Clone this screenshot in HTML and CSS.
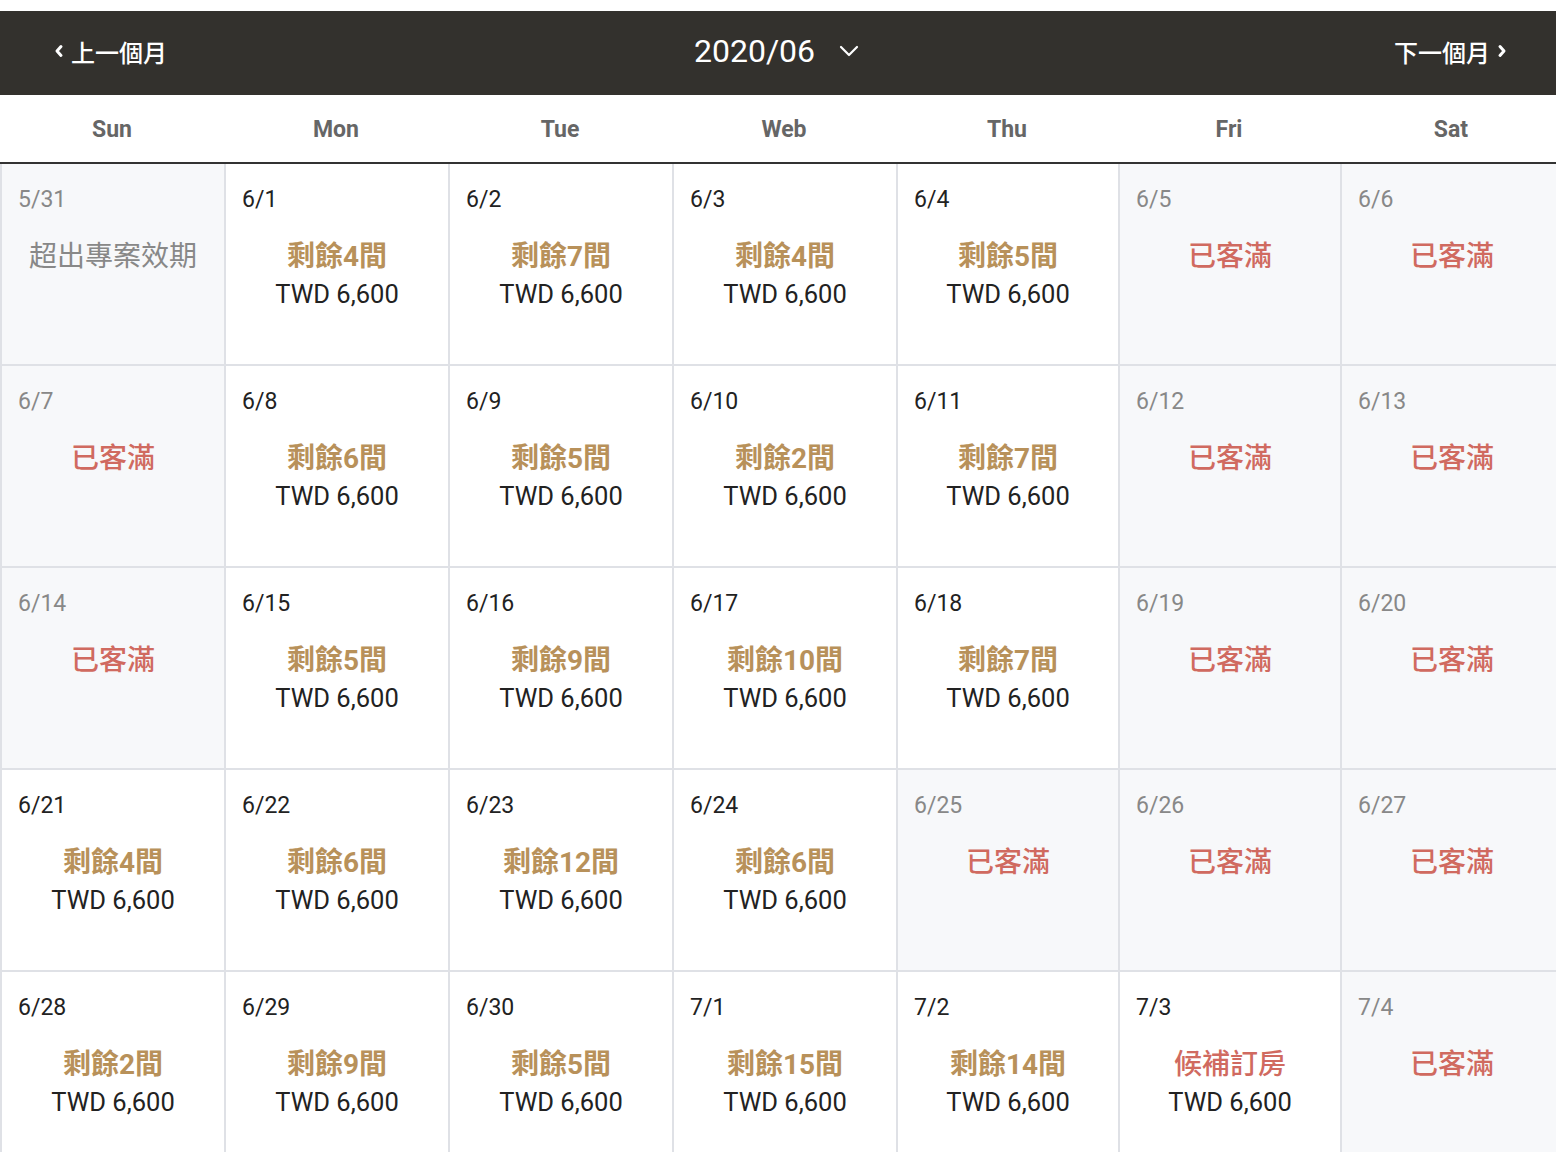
FILE: index.html
```html
<!DOCTYPE html>
<html lang="zh-Hant">
<head>
  <meta charset="UTF-8">
  <title>訂房日曆</title>
  <meta name="viewport" content="width=device-width, initial-scale=1">
  <link rel="stylesheet" href="styles.css">
</head>
<body>
  <div class="calendar">
    <div class="cal-bar">
      <a class="nav prev" href="#">
        <svg width="10" height="14" viewBox="0 0 10 14"><polyline points="7,2.5 3,7 7,11.5" fill="none" stroke="#fff" stroke-width="3" stroke-linecap="round" stroke-linejoin="round"/></svg>
        上一個月
      </a>
      <div class="month">
        2020/06
        <svg width="20" height="12" viewBox="0 0 20 12"><polyline points="2,2 10,10 18,2" fill="none" stroke="#fff" stroke-width="2.2" stroke-linecap="round" stroke-linejoin="round"/></svg>
      </div>
      <a class="nav next" href="#">
        下一個月
        <svg width="10" height="14" viewBox="0 0 10 14"><polyline points="3,2.5 7,7 3,11.5" fill="none" stroke="#fff" stroke-width="3" stroke-linecap="round" stroke-linejoin="round"/></svg>
      </a>
    </div>

    <div class="week-head">
      <div>Sun</div><div>Mon</div><div>Tue</div><div>Web</div><div>Thu</div><div>Fri</div><div>Sat</div>
    </div>

    <div class="days">
      <!-- week 1 -->
      <div class="day off"><div class="date">5/31</div><div class="status expired">超出專案效期</div></div>
      <div class="day"><div class="date">6/1</div><div class="status left">剩餘4間</div><div class="price">TWD 6,600</div></div>
      <div class="day"><div class="date">6/2</div><div class="status left">剩餘7間</div><div class="price">TWD 6,600</div></div>
      <div class="day"><div class="date">6/3</div><div class="status left">剩餘4間</div><div class="price">TWD 6,600</div></div>
      <div class="day"><div class="date">6/4</div><div class="status left">剩餘5間</div><div class="price">TWD 6,600</div></div>
      <div class="day off"><div class="date">6/5</div><div class="status full">已客滿</div></div>
      <div class="day off"><div class="date">6/6</div><div class="status full">已客滿</div></div>
      <!-- week 2 -->
      <div class="day off"><div class="date">6/7</div><div class="status full">已客滿</div></div>
      <div class="day"><div class="date">6/8</div><div class="status left">剩餘6間</div><div class="price">TWD 6,600</div></div>
      <div class="day"><div class="date">6/9</div><div class="status left">剩餘5間</div><div class="price">TWD 6,600</div></div>
      <div class="day"><div class="date">6/10</div><div class="status left">剩餘2間</div><div class="price">TWD 6,600</div></div>
      <div class="day"><div class="date">6/11</div><div class="status left">剩餘7間</div><div class="price">TWD 6,600</div></div>
      <div class="day off"><div class="date">6/12</div><div class="status full">已客滿</div></div>
      <div class="day off"><div class="date">6/13</div><div class="status full">已客滿</div></div>
      <!-- week 3 -->
      <div class="day off"><div class="date">6/14</div><div class="status full">已客滿</div></div>
      <div class="day"><div class="date">6/15</div><div class="status left">剩餘5間</div><div class="price">TWD 6,600</div></div>
      <div class="day"><div class="date">6/16</div><div class="status left">剩餘9間</div><div class="price">TWD 6,600</div></div>
      <div class="day"><div class="date">6/17</div><div class="status left">剩餘10間</div><div class="price">TWD 6,600</div></div>
      <div class="day"><div class="date">6/18</div><div class="status left">剩餘7間</div><div class="price">TWD 6,600</div></div>
      <div class="day off"><div class="date">6/19</div><div class="status full">已客滿</div></div>
      <div class="day off"><div class="date">6/20</div><div class="status full">已客滿</div></div>
      <!-- week 4 -->
      <div class="day"><div class="date">6/21</div><div class="status left">剩餘4間</div><div class="price">TWD 6,600</div></div>
      <div class="day"><div class="date">6/22</div><div class="status left">剩餘6間</div><div class="price">TWD 6,600</div></div>
      <div class="day"><div class="date">6/23</div><div class="status left">剩餘12間</div><div class="price">TWD 6,600</div></div>
      <div class="day"><div class="date">6/24</div><div class="status left">剩餘6間</div><div class="price">TWD 6,600</div></div>
      <div class="day off"><div class="date">6/25</div><div class="status full">已客滿</div></div>
      <div class="day off"><div class="date">6/26</div><div class="status full">已客滿</div></div>
      <div class="day off"><div class="date">6/27</div><div class="status full">已客滿</div></div>
      <!-- week 5 -->
      <div class="day"><div class="date">6/28</div><div class="status left">剩餘2間</div><div class="price">TWD 6,600</div></div>
      <div class="day"><div class="date">6/29</div><div class="status left">剩餘9間</div><div class="price">TWD 6,600</div></div>
      <div class="day"><div class="date">6/30</div><div class="status left">剩餘5間</div><div class="price">TWD 6,600</div></div>
      <div class="day"><div class="date">7/1</div><div class="status left">剩餘15間</div><div class="price">TWD 6,600</div></div>
      <div class="day"><div class="date">7/2</div><div class="status left">剩餘14間</div><div class="price">TWD 6,600</div></div>
      <div class="day"><div class="date">7/3</div><div class="status full">候補訂房</div><div class="price">TWD 6,600</div></div>
      <div class="day off"><div class="date">7/4</div><div class="status full">已客滿</div></div>
    </div>
  </div>
</body>
</html>
```

FILE: styles.css
```css
body { margin: 0; background: #fff; font-family: Roboto, "Noto Sans CJK TC", sans-serif; color: #222; }
.calendar { margin-top: 11px; overflow: hidden; }

/* top bar */
.cal-bar { box-sizing: border-box; height: 84px; padding: 0 49px 4px 54px; background: #33312d; color: #fff; display: flex; align-items: center; justify-content: space-between; }
.nav { color: #fff; text-decoration: none; font-size: 24px; font-weight: 500; display: flex; align-items: center; gap: 7px; width: 200px; }
.nav.next { justify-content: flex-end; }
.month { font-size: 32px; display: flex; align-items: center; gap: 24px; margin-right: 8px; }

/* weekday names */
.week-head { box-sizing: border-box; width: 1562px; display: grid; grid-template-columns: 224px 224px 224px 224px 222px 222px 1fr; height: 69px; padding-top: 2px; border-bottom: 2px solid #333; }
.week-head div { display: flex; align-items: center; justify-content: center; font-size: 23px; font-weight: bold; color: #666; }

/* day cells */
.days { box-sizing: border-box; width: 1562px; display: grid; grid-template-columns: 224px 224px 224px 224px 222px 222px 1fr; grid-auto-rows: 202px; border-left: 2px solid #dfe1e6; }
.day { box-sizing: border-box; border-right: 2px solid #dfe1e6; border-bottom: 2px solid #dfe1e6; padding: 19px 16px 0; background: #fff; }
.day:nth-child(7n) { border-right: none; }
.day.off { background: #f7f8fa; }
.date { font-size: 23px; line-height: 33px; color: #222; }
.day.off .date { color: #888; }
.status { text-align: center; font-size: 28px; line-height: 40px; margin-top: 21px; }
.status.left { color: #b8915a; font-weight: bold; }
.status.full { color: #d06a60; font-weight: 500; }
.status.expired { color: #888; }
.price { text-align: center; font-size: 25.5px; line-height: 36px; margin-top: -1px; color: #222; }
```
